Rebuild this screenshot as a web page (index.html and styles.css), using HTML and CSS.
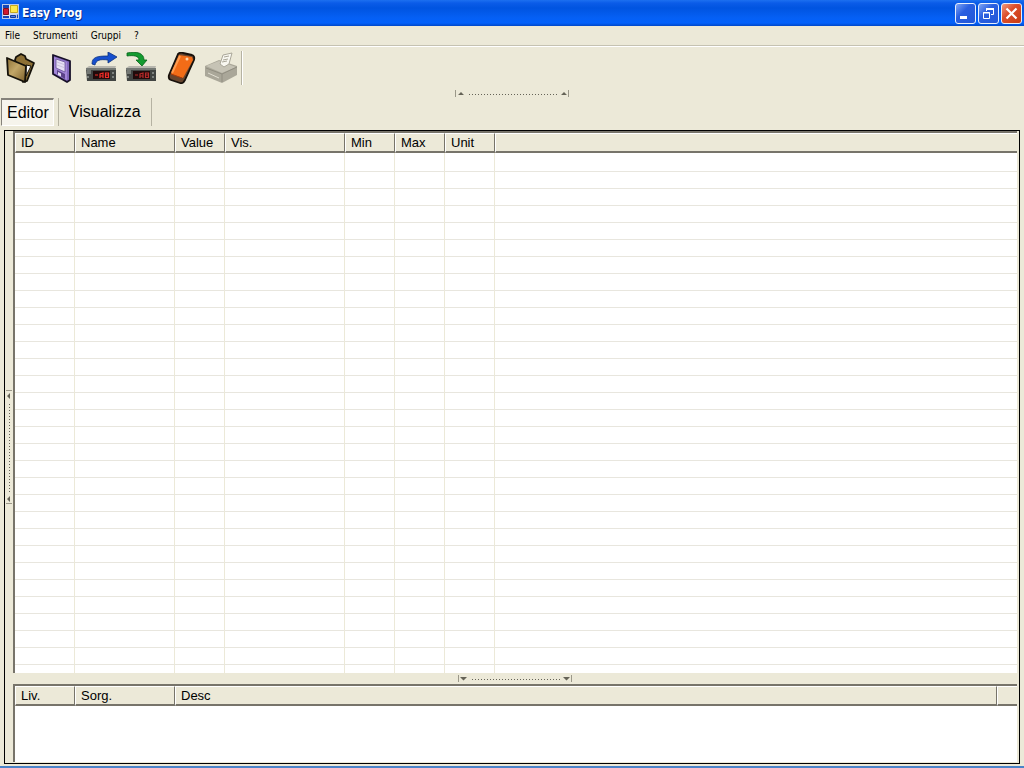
FILE: index.html
```html
<!DOCTYPE html>
<html lang="it">
<head>
<meta charset="utf-8">
<title>Easy Prog</title>
<link rel="stylesheet" href="styles.css">
</head>
<body>
<div class="window">
  <header class="titlebar">
    <svg class="app-icon" width="17" height="16" viewBox="0 0 17 16"><path fill="#b9c8e8" d="M0 0h17v15H0z"/><path fill="#1746b5" d="M1 1h7v3H1zM1 12h7v2H1zM15 10h1v4h-1z"/><path fill="#cf1831" stroke="#7f1020" d="M1.500 4.500h5v6h-5z"/><path fill="#ffe94a" stroke="#c7a91c" d="M8.500 1.500h7v7h-7z"/><path fill="#4a7ee8" stroke="#143b9b" d="M8.500 11.500h5v2h-5z"/><path d="M7.500 1v13M1 11.500h7M8 10h8" stroke="#dfe6f5"/></svg>
    <h1 class="title">Easy Prog</h1>
    <div class="window-buttons">
      <button class="win-btn" aria-label="Minimize"><svg width="19" height="19" viewBox="0 0 19 19"><path fill="#fff" d="M4 12h7v3H4z"/></svg></button>
      <button class="win-btn" aria-label="Restore"><svg width="19" height="19" viewBox="0 0 19 19" fill="none" stroke="#fff"><path d="M7.500 7V4.500h7v6H12"/><path d="M7 5h8" stroke-width="2"/><path d="M4.500 8.500h6v6h-6zM4 9h7"/></svg></button>
      <button class="win-btn close" aria-label="Close"><svg width="19" height="19" viewBox="0 0 19 19"><path d="M4.500 4.500l10 10M14.500 4.500l-10 10" stroke="#fff" stroke-width="2.200"/></svg></button>
    </div>
  </header>
  <nav class="menubar">
    <button class="menu">File</button>
    <button class="menu">Strumenti</button>
    <button class="menu">Gruppi</button>
    <button class="menu">?</button>
  </nav>
  <div class="toolbar">
    <button class="tool" aria-label="Open"><svg width="32" height="32" viewBox="0 0 32 32" stroke="#15120a" stroke-width="1.800" stroke-linejoin="round"><defs><linearGradient id="fold" x2="1" y2="1"><stop stop-color="#8d7035"/><stop offset=".45" stop-color="#c2a768"/><stop offset="1" stop-color="#7a5d28"/></linearGradient></defs><path fill="#8d7035" d="M10 8l1-3 5-3 4 2 1 3 8 4-7 18-4 1z"/><path fill="#fff" stroke-width="1" d="M21 13l5 1-5 10z"/><path fill="url(#fold)" d="M2 6l19 8-1 16L3 23z"/></svg></button>
    <button class="tool" aria-label="Save"><svg width="32" height="32" viewBox="0 0 32 32" stroke-linejoin="round"><path fill="#8268bd" stroke="#171028" stroke-width="1.800" d="M8 3l17 6v19l-3 2-14-8z"/><path fill="#a386d8" d="M9 5l13 5v18L9 21z"/><path fill="#e6dff5" stroke="#665296" stroke-width=".8" d="M11 7l9 3v10l-9-4z"/><path d="M12 10l7 2.500M12 13l7 2.500" stroke="#c9c1dc"/><path fill="#5b4389" d="M12 18l8 4v5l-8-5z"/><path fill="#e6dff5" d="M13 20l3 1.500v3L13 23z"/></svg></button>
    <button class="tool" aria-label="Read from device"><svg width="32" height="32" viewBox="0 0 32 32"><path fill="#b7b6ae" d="M1 16l3-2h27l-1 3z"/><path fill="#414442" d="M1 17h30v12H2z"/><path fill="#737773" d="M1 16h30v2H1zM2 18h4v4H2z"/><path fill="#200b0b" d="M8 19h17v8H8z"/><path d="M10 23h3M15 26v-4l3-1v5M15 24h3M20.500 21h3v4.500h-3zM20.500 23h3" stroke="#f02e29" stroke-width="1.200" fill="none"/><path d="M3 24v2M28 20v2M28 24v2" stroke="#bcc1bd"/><path fill="#174fce" stroke="#0b327f" stroke-width=".8" d="M7 12C7 5 12 4 23 4V0l9 5-9 6V8C15 7 11 8 10 13z"/></svg></button>
    <button class="tool" aria-label="Write to device"><svg width="32" height="32" viewBox="0 0 32 32"><path fill="#b7b6ae" d="M1 16l3-2h27l-1 3z"/><path fill="#414442" d="M1 17h30v12H2z"/><path fill="#737773" d="M1 16h30v2H1zM2 18h4v4H2z"/><path fill="#200b0b" d="M8 19h17v8H8z"/><path d="M10 23h3M15 26v-4l3-1v5M15 24h3M20.500 21h3v4.500h-3zM20.500 23h3" stroke="#b52b2a" stroke-width="1.200" fill="none"/><path d="M3 24v2M28 20v2M28 24v2" stroke="#bcc1bd"/><path fill="#149b30" stroke="#08621b" stroke-width=".8" d="M2 1C12-1 19 1 19 8h3l-5 6-6-6h3C14 4 9 3 2 4z"/></svg></button>
    <button class="tool" aria-label="Programming key"><svg width="32" height="32" viewBox="0 0 32 32" stroke-linejoin="round"><path fill="#68462f" stroke="#17100b" stroke-width="1.800" d="M13 2q2-2 5-1l9 2q3 1 2 5l-9 20q-2 4-5 3l-9-3q-3-1-2-5z"/><path fill="#f26c17" d="M14 3l13 2 1 3-10 18-12-4z"/><path d="M15 4L7 21" stroke="#ff9c4f" stroke-width="2"/><path d="M6 22l11 4" stroke="#ab3907"/><circle cx="22" cy="7" r="1.500" fill="#ffd4a7"/></svg></button>
    <button class="tool" aria-label="Print" disabled><svg width="34" height="32" viewBox="0 0 34 32" stroke-linejoin="round"><path fill="#aaa799" d="M0 14l14-6 18 6v9l-15 8-17-7z"/><path fill="#c6c3b5" d="M1 14l13-5 17 6-14 6z"/><path fill="#f8f7f0" stroke="#aaa799" d="M15 12l3-9 9-2-3 11-5 3z"/><path d="M19 5l5-1M18 8l5-1M17 10l5-1" stroke="#aaa799"/><path d="M1 16l16 6 15-7M17 22v8" stroke="#918e81" fill="none"/><path d="M3 21l11 5" stroke="#e2dfd2"/></svg></button>
    <span class="tool-end"></span>
  </div>
  <button class="splitter top" aria-label="Collapse toolbar"><svg width="116" height="9" viewBox="0 0 116 9"><path d="M1.500 1v7M114.500 1v7" stroke="#9b9889"/><path fill="#656357" d="M4 6l3-3 3 3zM107 6l3-3 3 3z"/><path d="M15 5.500h90" stroke="#656357" stroke-dasharray="1 2"/></svg></button>
  <div class="tabs" role="tablist">
    <button class="tab selected" role="tab" aria-selected="true">Editor</button>
    <button class="tab" role="tab" aria-selected="false">Visualizza</button>
  </div>
  <main class="workspace">
    <button class="splitter side" aria-label="Collapse side panel"><svg width="8" height="116" viewBox="0 0 8 116"><path d="M1 1.500h6M1 114.500h6" stroke="#9b9889"/><path fill="#656357" d="M5 4L2 7l3 3zM5 107l-3 3 3 3z"/><path d="M4.500 15v90" stroke="#656357" stroke-dasharray="1 2"/></svg></button>
    <div class="lists">
      <section class="list params">
        <table>
          <colgroup><col class="c60"><col class="c100"><col class="c50"><col class="c120"><col class="c50"><col class="c50"><col class="c50"><col></colgroup>
          <thead><tr><th>ID</th><th>Name</th><th>Value</th><th>Vis.</th><th>Min</th><th>Max</th><th>Unit</th><th></th></tr></thead>
          <tbody id="rows"></tbody>
        </table>
      </section>
      <button class="splitter bottom" aria-label="Collapse messages"><svg width="116" height="9" viewBox="0 0 116 9"><path d="M1.500 1v7M114.500 1v7" stroke="#9b9889"/><path fill="#656357" d="M3 3h7L6.500 6.500zM106 3h7l-3.500 3.500z"/><path d="M15 5.500h90" stroke="#656357" stroke-dasharray="1 2"/></svg></button>
      <section class="list messages">
        <table>
          <colgroup><col class="c60"><col class="c100"><col><col class="c20"></colgroup>
          <thead><tr><th>Liv.</th><th>Sorg.</th><th>Desc</th><th></th></tr></thead>
        </table>
      </section>
    </div>
  </main>
</div>
<script src="script.js"></script>
</body>
</html>
```
FILE: styles.css
```css
* { box-sizing: border-box; }
body { margin: 0; background: #ece9d8; color: #000; font-family: "Liberation Sans", Arial, sans-serif; }
button { margin: 0; padding: 0; border: 0; background: none; color: inherit; font: inherit; }
svg { display: block; }

.window { display: flex; flex-direction: column; height: 100vh; border-bottom: 2px solid #4a83c8; }

.titlebar { display: flex; align-items: center; height: 26px; padding: 0 2px; background: linear-gradient(#1c70f0 0, #0b5ce8 3px, #0054e0 8px, #0560f5 18px, #0361fb 23px, #0148c8 26px); }
.app-icon { margin-bottom: 2px; }
.title { flex: 1; margin: 0 0 0 3px; color: #fff; font: bold 12px/16px "DejaVu Sans Condensed", sans-serif; text-shadow: 1px 1px #0b2f8a; }
.window-buttons { display: flex; gap: 2px; }
.win-btn { width: 21px; height: 21px; border: 1px solid #e8effc; border-radius: 3px; background: linear-gradient(135deg, #7fa5f5, #2a5fe0 40%, #2257d8); }
.win-btn.close { background: linear-gradient(135deg, #ee9a80, #dc4f2c 40%, #c83c14); }

.menubar { display: flex; gap: 13px; height: 20px; padding: 0 5px; border-bottom: 1px solid #c5c2b2; }
.menu { font: 10px/18px "DejaVu Sans Condensed", sans-serif; }

.toolbar { display: flex; align-items: center; gap: 8px; height: 43px; padding: 0 5px; border-top: 1px solid #fff; }
.tool { height: 34px; }
.tool-end { width: 2px; height: 34px; margin-left: -6px; border-left: 1px solid #b5b2a2; border-right: 1px solid #fff; }

.splitter { display: flex; align-items: center; justify-content: center; flex: none; }
.splitter.top { height: 9px; }
.splitter.side { width: 8px; }
.splitter.bottom { height: 11px; }

.tabs { display: flex; height: 32px; padding: 0 0 4px 1px; }
.tab { padding: 0 10px; border-right: 1px solid #b5b2a2; font-size: 16px; line-height: 24px; }
.tab.selected { margin-right: 5px; padding: 0 4px 0 5px; border: 1px solid #fff; border-top: 2px solid #85827a; border-left: 1px solid #85827a; background: #f6f4ec; box-shadow: 4px 0 #ece9d8, 5px 0 #b5b2a2; }

.workspace { display: flex; flex: 1; min-height: 0; margin: 0 4px 2px; border: 1px solid #000; }
.lists { display: flex; flex: 1; flex-direction: column; min-width: 0; padding: 0 2px 1px 0; }
.list { overflow: hidden; border-top: 2px solid #77746a; border-left: 2px solid #77746a; background: #fff; }
.params { flex: 1; min-height: 0; }
.messages { flex: none; height: 78px; }
.list table { width: 100%; border-collapse: separate; border-spacing: 0; table-layout: fixed; }
.c20 { width: 20px; }
.c50 { width: 50px; }
.c60 { width: 60px; }
.c100 { width: 100px; }
.c120 { width: 120px; }
th { height: 20px; padding: 0 0 0 5px; border: solid; border-width: 1px 1px 2px; border-color: #fff #77746a #77746a #fff; background: #ece9d8; font-size: 13px; font-weight: normal; line-height: 17px; text-align: left; white-space: nowrap; }
th:last-child { border-right: 0; }
td { height: 17px; padding: 0; border-right: 1px solid #ece9d8; border-bottom: 1px solid #e8e6de; }
td:last-child { border-right: 0; }
tbody tr:first-child td { height: 19px; }
```
FILE: script.js
```js
const rows = document.getElementById("rows");
for (let i = 0; i < 60; i++) {
  const row = rows.insertRow();
  for (let c = 0; c < 8; c++) row.insertCell();
}
```
